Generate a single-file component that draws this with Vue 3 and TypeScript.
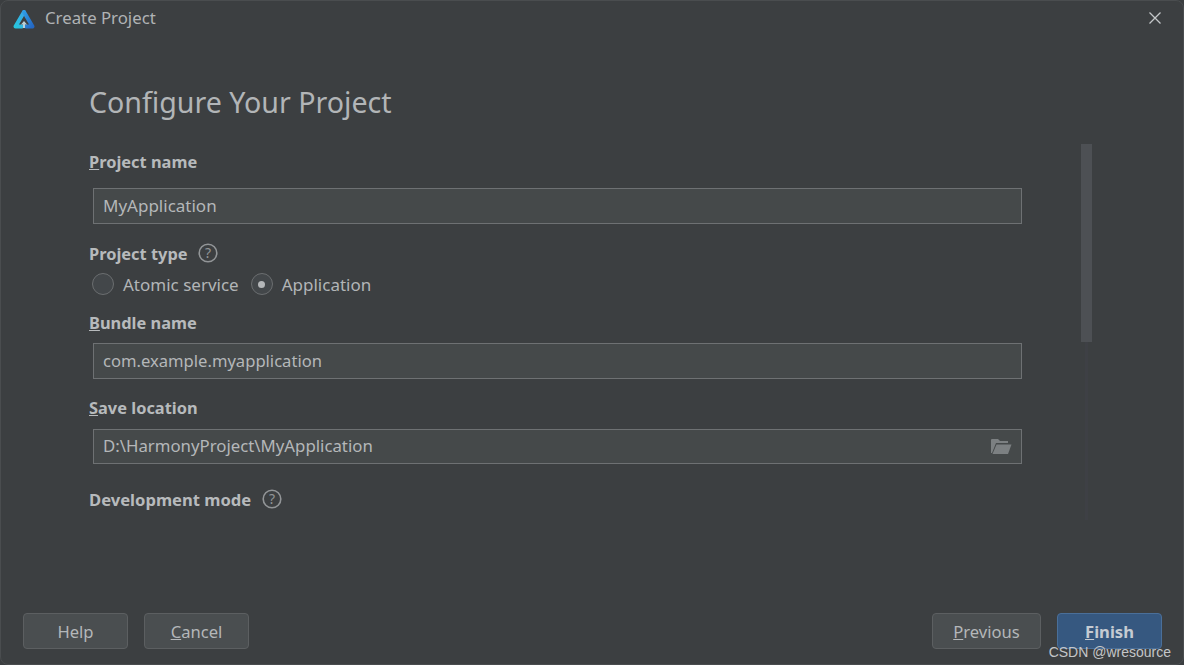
<script setup lang="ts">
const fieldsTop = ['MyApplication']
</script>

<template>
  <div class="dialog">
    <header class="titlebar">
      <svg class="logo" viewBox="0 0 24 20" width="24" height="20">
        <defs>
          <linearGradient id="lgl" x1="0" y1="1" x2="1" y2="0">
            <stop offset="0" stop-color="#27c4dc" />
            <stop offset="1" stop-color="#3aa6e8" />
          </linearGradient>
          <linearGradient id="lgr" x1="0" y1="0" x2="1" y2="1">
            <stop offset="0" stop-color="#2f9be6" />
            <stop offset="1" stop-color="#2468c4" />
          </linearGradient>
        </defs>
        <path d="M10 17.5 H3.5 L12 3" fill="none" stroke="url(#lgl)" stroke-width="4" stroke-linejoin="round" stroke-linecap="round" />
        <path d="M12 3 L20.5 17.5 H14" fill="none" stroke="url(#lgr)" stroke-width="4" stroke-linejoin="round" stroke-linecap="round" />
        <path d="M12 12 L9 15.5 H11 V19 H13 V15.5 H15 Z" fill="#b8d0d8" />
      </svg>
      <span class="title">Create Project</span>
      <svg class="close" viewBox="0 0 14 14" width="14" height="14">
        <path d="M1.5 1.5 L12.5 12.5 M12.5 1.5 L1.5 12.5" stroke="#c4c7c9" stroke-width="1.3" fill="none" />
      </svg>
    </header>

    <main class="body">
      <h1 class="heading">Configure Your Project</h1>
      <div class="scroll-area">
        <form class="form">
          <label class="label first"><u>P</u>roject name</label>
          <div class="field name" v-for="v in fieldsTop" :key="v">{{ v }}</div>

          <div class="label-row">
            <span class="label">Project type</span>
            <svg class="help" viewBox="0 0 20 20" width="20" height="20">
              <circle cx="10" cy="10" r="8.8" fill="none" stroke="#929597" stroke-width="1.6" />
              <text x="10" y="15" text-anchor="middle" class="help-mark">?</text>
            </svg>
          </div>
          <div class="radios">
            <span class="radio"></span>
            <span class="radio-text atomic">Atomic service</span>
            <span class="radio checked"><i></i></span>
            <span class="radio-text">Application</span>
          </div>

          <label class="label bundle"><u>B</u>undle name</label>
          <div class="field pkg">com.example.myapplication</div>

          <label class="label save"><u>S</u>ave location</label>
          <div class="field path">
            <span>D:\HarmonyProject\MyApplication</span>
            <svg class="folder" viewBox="0 0 22 17" width="22" height="17">
              <path d="M1 15 V2 Q1 1 2 1 H8 L10 3 H18 V5 H6 L2 15 Z" fill="#7c8082" />
              <path d="M6.5 6.5 H21.5 L18 16 H2.5 Z" fill="#7c8082" />
            </svg>
          </div>

          <div class="label-row dev">
            <span class="label">Development mode</span>
            <svg class="help" viewBox="0 0 20 20" width="20" height="20">
              <circle cx="10" cy="10" r="8.8" fill="none" stroke="#929597" stroke-width="1.6" />
              <text x="10" y="15" text-anchor="middle" class="help-mark">?</text>
            </svg>
          </div>
        </form>
        <div class="scrollbar"><div class="thumb"></div></div>
      </div>
    </main>

    <footer class="footer">
      <button class="btn" type="button">Help</button>
      <button class="btn" type="button"><u>C</u>ancel</button>
      <span class="spacer"></span>
      <button class="btn wide" type="button"><u>P</u>revious</button>
      <button class="btn primary" type="button"><u>F</u>inish</button>
    </footer>

    <span class="watermark">CSDN @wresource</span>
  </div>
</template>

<style>
html, body { margin: 0; background: #3b3e40; }
</style>

<style scoped>
.dialog {
  position: relative;
  box-sizing: border-box;
  width: 1184px;
  height: 665px;
  display: flex;
  flex-direction: column;
  overflow: hidden;
  background: #3c3f41;
  border: 1px solid #4a4d4f;
  border-radius: 8px;
  font-family: "Noto Sans", "Open Sans", sans-serif;
  color: #b4b7b9;
}
.titlebar {
  display: flex;
  align-items: center;
  height: 36px;
  padding: 0 21px 3px 11px;
  box-sizing: border-box;
  flex: none;
}
.logo { flex: none; margin-top: 2px; }
.title { margin-left: 9px; font-size: 16.8px; color: #b0b3b5; }
.close { margin-left: auto; }
.body {
  flex: 1;
  display: flex;
  flex-direction: column;
  padding-left: 88px;
  min-height: 0;
}
.heading {
  margin: 45px 0 0;
  font-size: 28.6px;
  line-height: 40px;
  font-weight: 400;
  color: #b2b5b7;
}
.scroll-area {
  display: flex;
  align-items: flex-start;
}
.form {
  width: 933px;
  flex: none;
  display: flex;
  flex-direction: column;
}
.label {
  font-size: 16.4px;
  line-height: 24px;
  font-weight: 700;
  color: #b7babc;
}
.label.first { margin-top: 28px; }
.field {
  box-sizing: border-box;
  display: flex;
  align-items: center;
  justify-content: space-between;
  height: 36px;
  margin: 14px 0 0 4px;
  padding: 0 9px 2px;
  background: #45494a;
  border: 1px solid #6e7173;
  font-size: 16.7px;
  color: #b4b7b9;
}
.field.name { font-size: 17px; }
.field.pkg { font-size: 16.6px; }
.field.path { font-size: 16.8px; height: 35px; padding-bottom: 3px; }
.label-row {
  display: flex;
  align-items: center;
  gap: 10px;
  margin-top: 18px;
}
.help { flex: none; margin-top: -3px; }
.help-mark { font-size: 14px; fill: #929597; font-family: "Noto Sans", sans-serif; }
.radios {
  display: flex;
  align-items: center;
  height: 30px;
  margin-top: 3px;
  font-size: 17px;
  padding-left: 3px;
}
.radio {
  box-sizing: border-box;
  width: 22px;
  height: 22px;
  border-radius: 50%;
  background: #43474a;
  border: 1.5px solid #6b6e70;
  display: flex;
  align-items: center;
  justify-content: center;
}
.radio i {
  width: 7px;
  height: 7px;
  border-radius: 50%;
  background: #b4b7b9;
}
.radio-text { margin-left: 9px; color: #b2b5b7; }
.radio-text.atomic { margin-right: 12px; }
.label.bundle { margin-top: 12px; }
.label.bundle + .field { margin-top: 8px; }
.label.save { margin-top: 17px; }
.label.save + .field { margin-top: 9px; }
.folder { flex: none; margin-top: 2px; }
.label-row.dev { margin-top: 24px; gap: 11px; }
.label-row.dev .label { font-size: 16.6px; }
.scrollbar {
  width: 11px;
  height: 376px;
  margin: 22px 0 0 59px;
  flex: none;
  background: linear-gradient(to right, transparent 4px, #3e4045 4px, #3e4045 7px, transparent 7px);
}
.thumb {
  height: 198px;
  background: #4d5054;
}
.footer {
  flex: none;
  display: flex;
  align-items: flex-start;
  gap: 16px;
  height: 51px;
  padding: 0 21px 15px 22px;
  box-sizing: border-box;
}
.spacer { flex: 1; }
.btn {
  box-sizing: border-box;
  height: 36px;
  width: 105px;
  padding: 0;
  background: #4a4e50;
  border: 1px solid #5c5f61;
  border-radius: 4px;
  color: #b4b7b9;
  font-family: inherit;
  font-size: 16.6px;
}
.btn.wide { width: 109px; }
.btn.primary {
  background: #365880;
  border-color: #4a6f99;
  color: #c5cbd2;
  font-weight: 700;
}
.watermark {
  position: absolute;
  right: 12px;
  bottom: 4px;
  font-family: "Liberation Sans", sans-serif;
  font-size: 14px;
  color: #c4c6c8;
}
</style>
